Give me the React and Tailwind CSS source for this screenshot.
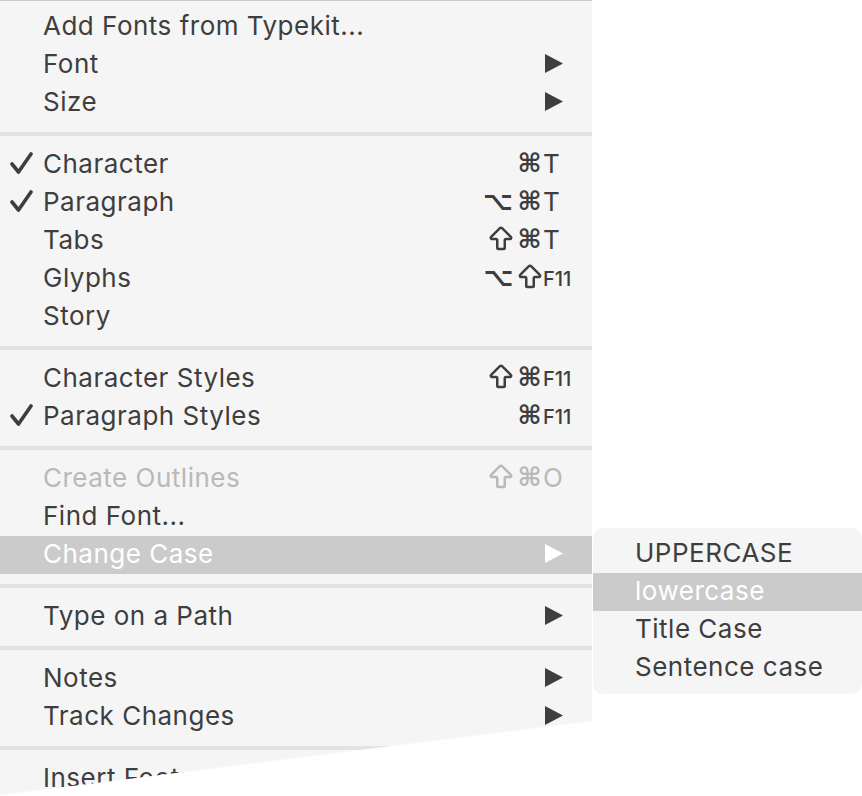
import { ArrowBigUp } from "lucide-react";

const font = { fontFamily: "Inter, 'Liberation Sans', sans-serif" };
const symFont = { fontFamily: "'DejaVu Sans', sans-serif" };

const sections = [
  [
    { label: "Add Fonts from Typekit..." },
    { label: "Font", arrow: true },
    { label: "Size", arrow: true },
  ],
  [
    { label: "Character", check: true, mods: ["⌘"], key: "T" },
    { label: "Paragraph", check: true, mods: ["⌥", "⌘"], key: "T" },
    { label: "Tabs", mods: ["⇧", "⌘"], key: "T" },
    { label: "Glyphs", mods: ["⌥", "⇧"], key: "F11" },
    { label: "Story" },
  ],
  [
    { label: "Character Styles", mods: ["⇧", "⌘"], key: "F11" },
    { label: "Paragraph Styles", check: true, mods: ["⌘"], key: "F11" },
  ],
  [
    { label: "Create Outlines", disabled: true, mods: ["⇧", "⌘"], key: "O" },
    { label: "Find Font..." },
    { label: "Change Case", arrow: true, active: true },
  ],
  [{ label: "Type on a Path", arrow: true }],
  [
    { label: "Notes", arrow: true },
    { label: "Track Changes", arrow: true },
  ],
  [{ label: "Insert Footnote" }],
];

const caseItems = ["UPPERCASE", "lowercase", "Title Case", "Sentence case"];

const Arrow = ({ color }) => (
  <svg width="18" height="19" viewBox="0 0 18 19" className="ml-[2px]">
    <polygon points="0,0 18,9.5 0,19" fill={color} />
  </svg>
);

const Check = () => (
  <svg width="24" height="24" viewBox="0 0 24 24">
    <polyline
      points="2,13 8.5,21 21,3"
      fill="none"
      stroke="#3e3e3e"
      strokeWidth="3.6"
      strokeLinecap="round"
      strokeLinejoin="round"
    />
  </svg>
);

const Mod = ({ m }) =>
  m === "⇧" ? (
    <ArrowBigUp size={30} strokeWidth={2} className="mx-[-3px]" />
  ) : (
    <span>{m}</span>
  );

const Row = ({ item }) => {
  const text = item.active
    ? "text-white"
    : item.disabled
    ? "text-[#b9b9b9]"
    : "text-[#3e3e3e]";
  return (
    <div
      className={`flex items-center h-[38px] pb-[4px] text-[26px] tracking-[0.5px] ${text} ${
        item.active ? "bg-[#cbcbcb]" : ""
      }`}
    >
      <div className="w-[43px] pl-[10px] flex items-center">
        {item.check && <Check />}
      </div>
      <div className="flex-1 whitespace-nowrap">{item.label}</div>
      <div className="flex items-center gap-[4px] text-[26px] font-bold leading-none" style={symFont}>
        {(item.mods || []).map((m, i) => (
          <Mod key={i} m={m} />
        ))}
      </div>
      <div className="w-[50px] flex items-center pl-[1px]">
        {item.arrow && <Arrow color={item.active ? "#ffffff" : "#3e3e3e"} />}
        {item.key && (
          <span
            className={
              item.key === "F11"
                ? "text-[20px] font-medium tracking-[0px] mt-[4px]"
                : "text-[26px] tracking-[0px]"
            }
          >
            {item.key}
          </span>
        )}
      </div>
    </div>
  );
};

export default function App() {
  return (
    <div className="relative w-[862px] h-[796px] bg-white overflow-hidden" style={font}>
      <div className="w-[592px] bg-[#f5f5f5] border-t border-[#c9c9c9] pt-[7px]">
        {sections.map((sec, i) => (
          <div key={i}>
            {i > 0 && (
              <div className="py-[10px]">
                <div className="h-[4px] bg-[#e3e3e3]" />
              </div>
            )}
            {sec.map((item) => (
              <Row key={item.label} item={item} />
            ))}
          </div>
        ))}
      </div>

      {/* Change Case submenu */}
      <div className="absolute left-[593px] top-[528px] w-[269px] bg-[#f5f5f5] rounded-[10px] py-[7px]">
        {caseItems.map((c) => (
          <div
            key={c}
            className={`h-[38px] pb-[3px] flex items-center pl-[42px] text-[26px] tracking-[0.5px] ${
              c === "lowercase" ? "bg-[#cbcbcb] text-white" : "text-[#3e3e3e]"
            }`}
          >
            {c}
          </div>
        ))}
      </div>

      {/* torn edge at the bottom */}
      <svg className="absolute left-0 top-0" width="862" height="796" viewBox="0 0 862 796">
        <polygon points="0,795 592,721 862,721 862,796 0,796" fill="#ffffff" />
      </svg>
    </div>
  );
}
